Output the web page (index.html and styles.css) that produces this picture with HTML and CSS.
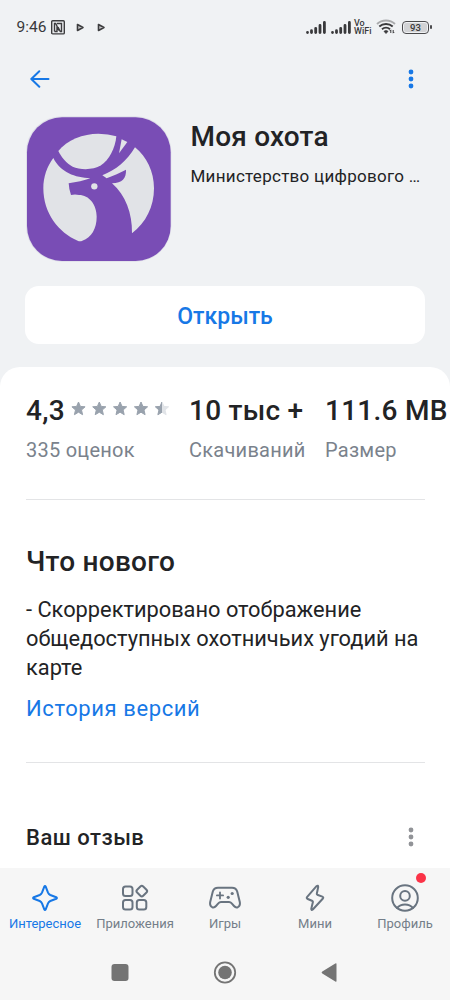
FILE: index.html
```html
<!DOCTYPE html>
<html lang="ru">
<head>
<meta charset="utf-8">
<title>Моя охота</title>
<link rel="stylesheet" href="styles.css">
</head>
<body>
<div class="screen">
  <header class="status">
    <span class="time">9:46</span>
    <svg class="nfc" width="14" height="15" viewBox="0 0 14 15" fill="none" stroke="#3d3d3f" stroke-width="1.4"><rect x=".7" y=".7" width="12.6" height="13.2" rx="1"/><path d="M3.500 11.500V3.500h1.200L8 10.500M3.500 11.500H6V6M6 3.500h4.500v8H9.300L7 7"/></svg>
    <svg class="play" width="9" height="9" viewBox="0 0 9 9"><path d="M1.500 1.500v6l5.500-3z" fill="#c9c9cb" stroke="#3d3d3f" stroke-width="1.600" stroke-linejoin="round"/></svg>
    <svg class="play second" width="9" height="9" viewBox="0 0 9 9"><path d="M1.500 1.500v6l5.500-3z" fill="#c9c9cb" stroke="#3d3d3f" stroke-width="1.600" stroke-linejoin="round"/></svg>
    <svg class="signal" width="20" height="13" viewBox="0 0 20 13" stroke="#39393b" stroke-width="2.800" stroke-linecap="round"><path d="M1.500 11.500v0M5.500 11.500v-1.800M9.700 11.500V7.300M14 11.500V4.500M18.400 11.500V1.500"/></svg>
    <svg class="signal" width="20" height="13" viewBox="0 0 20 13" stroke="#39393b" stroke-width="2.800" stroke-linecap="round"><path d="M1.500 11.500v0M5.500 11.500v-1.800M9.700 11.500V7.300M14 11.500V4.500M18.400 11.500V1.500"/></svg>
    <span class="vowifi"><span>Vo</span><span>WiFi</span></span>
    <svg class="wifi" width="20" height="16" viewBox="0 0 20 16" fill="none" stroke="#39393b" stroke-width="1.900"><path d="M1 5C6 .3 14 .3 19 5" stroke="#a9aaac"/><path d="M3.300 7.500C7 4.200 13 4.200 16.700 7.500M6 10.300c2.300-2 5.700-2 8 0"/><path d="M8 12.300q2-1.400 4 0l-2 2.200z" fill="#39393b" stroke-width=".8"/><path d="M14.800 14v-3M13.800 12l1-1.200M17.200 11v3M18.200 13l-1 1.200" stroke-width="1"/></svg>
    <span class="battery"><span class="level">93</span></span>
  </header>

  <nav class="toolbar">
    <svg width="20" height="18" viewBox="0 0 20 18" fill="none" stroke="#1778e6" stroke-width="2" stroke-linecap="round" stroke-linejoin="round"><path d="M18.500 9H1.500M9.300 1.200L1.300 9l8 7.800"/></svg>
    <svg width="6" height="20" viewBox="0 0 6 20" fill="#1778e6"><circle cx="3" cy="3" r="2.400"/><circle cx="3" cy="10" r="2.400"/><circle cx="3" cy="17" r="2.400"/></svg>
  </nav>

  <section class="app">
    <svg class="app-icon" width="146" height="146" viewBox="33 33 438 438">
      <rect x="33" y="34" width="436" height="436" rx="107" fill="#dfdfe9"/>
      <rect x="36" y="37" width="431" height="431" rx="105" fill="#794db5"/>
      <g fill="#e1e3e7">
        <path d="M130 138C155 105 205 86 250 86Q280 86 304 94C301 129 282 166 258 181C234 196 195 195 173 185C154 175 140 158 130 138Z"/>
        <path d="M320 103L337 111L312 145Z"/>
        <path d="M115 159C96 185 85 215 85 250C85 325 132 384 188 407Q195 410 202 407C230 397 245 370 245 335C245 299 222 270 192 270Q180 267 168 270Q162 254 161 235C184 232 208 227 226 220C180 217 137 203 115 159Z"/>
        <path d="M360 127C395 155 417 200 417 250C417 305 393 353 351 385C352 325 332 270 291 235C322 234 334 220 333 194C315 204 296 211 275 220L262 211C303 195 335 168 360 127Z"/>
        <circle cx="238" cy="244" r="9.500"/>
      </g>
    </svg>
    <div class="app-text">
      <h1>Моя охота</h1>
      <p>Министерство цифрового …</p>
    </div>
  </section>

  <button class="open">Открыть</button>

  <main class="sheet">
    <section class="stats">
      <div class="stat rating">
        <div class="value"><span>4,3</span>
          <svg class="stars" width="101" height="16" viewBox="0 0 101 16">
            <defs><path id="star" d="M7.500 1l1.900 4.400 4.700.400-3.600 3.200 1.100 4.700-4.100-2.500-4.100 2.500 1.100-4.700L.9 5.800l4.700-.400z" stroke-width="1" stroke-linejoin="round"/>
            <clipPath id="half"><rect width="7.500" height="16"/></clipPath></defs>
            <g fill="#99a2ad" stroke="#99a2ad"><use href="#star"/><use href="#star" x="20.800"/><use href="#star" x="41.600"/><use href="#star" x="62.500"/></g>
            <g transform="translate(83.500)"><use href="#star" fill="#e1e4e8" stroke="#e1e4e8"/><g clip-path="url(#half)"><use href="#star" fill="#99a2ad" stroke="#99a2ad"/></g></g>
          </svg>
        </div>
        <div class="label">335 оценок</div>
      </div>
      <div class="stat downloads"><div class="value">10 тыс +</div><div class="label">Скачиваний</div></div>
      <div class="stat"><div class="value size">111.6 MB</div><div class="label">Размер</div></div>
    </section>

    <section class="news">
      <h2>Что нового</h2>
      <p>- Скорректировано отображение<br>общедоступных охотничьих угодий на<br>карте</p>
      <a class="history">История версий</a>
    </section>

    <section class="review">
      <h3>Ваш отзыв</h3>
      <svg width="6" height="20" viewBox="0 0 6 20" fill="#919397"><circle cx="3" cy="3" r="2.400"/><circle cx="3" cy="10" r="2.400"/><circle cx="3" cy="17" r="2.400"/></svg>
    </section>
  </main>

  <footer class="bottom">
    <nav class="tabs">
      <div class="tab active">
        <svg width="30" height="30" viewBox="0 0 30 30"><path d="M15.800 3.800L18 9.700Q18.700 11.300 20.300 12L26.200 14.200Q27.600 15 26.200 15.800L20.300 18Q18.700 18.700 18 20.300L15.800 26.200Q15 27.600 14.200 26.200L12 20.300Q11.300 18.700 9.700 18L3.800 15.800Q2.400 15 3.800 14.200L9.700 12Q11.300 11.300 12 9.700L14.200 3.800Q15 2.400 15.800 3.800Z"/></svg>
        <span>Интересное</span>
      </div>
      <div class="tab">
        <svg width="30" height="30" viewBox="0 0 30 30"><rect x="3" y="3.500" width="9.500" height="9.500" rx="2.500"/><rect x="3" y="17" width="9.500" height="9.500" rx="2.500"/><rect x="16.800" y="17" width="9.500" height="9.500" rx="2.500"/><rect x="17.500" y="3.800" width="8.600" height="8.600" rx="2" transform="rotate(45 21.800 8.100)"/></svg>
        <span>Приложения</span>
      </div>
      <div class="tab">
        <svg width="32" height="30" viewBox="0 0 32 30"><path d="M9 4.700H23Q27 4.700 28.200 8.500L30.800 19Q31.500 23 28.800 24.200Q26.700 25 25 23L22.500 20.200Q21.500 19 20 19H12Q10.500 19 9.500 20.200L7 23Q5.300 25 3.200 24.200Q.5 23 1.200 19L3.800 8.500Q5 4.700 9 4.700Z"/><path d="M11 9.300v6.200M7.900 12.400h6.200" stroke-width="1.800"/><g class="dots"><circle cx="23.200" cy="10.500" r="1.600"/><circle cx="19.200" cy="14.300" r="1.600"/></g></svg>
        <span>Игры</span>
      </div>
      <div class="tab">
        <svg width="30" height="30" viewBox="0 0 30 30"><path d="M16.500 3.200L7.200 13.800Q6 15.300 7.800 16L12.500 18Q13 18.300 12.900 19L11.300 25.700Q11.200 27.700 12.800 26.500L22.700 15.800Q24 14.300 22.300 13.600L17.300 11.700Q16.700 11.400 16.800 10.700L18.200 4Q18.200 1.800 16.500 3.200Z"/></svg>
        <span>Мини</span>
      </div>
      <div class="tab">
        <svg width="30" height="30" viewBox="0 0 30 30"><circle cx="15" cy="15" r="12.800"/><circle cx="15" cy="12.900" r="4.800"/><path d="M7 25Q10 21.500 15 21.500T23 25"/></svg>
        <span>Профиль</span>
        <i class="badge"></i>
      </div>
    </nav>
    <div class="system">
      <svg width="226" height="24" viewBox="0 0 226 24" fill="#747474"><rect x="0.500" y="4" width="17" height="17" rx="3"/><circle cx="114" cy="12.500" r="10.200" fill="none" stroke="#747474" stroke-width="1.800"/><circle cx="114" cy="12.500" r="6.800"/><path d="M225.500 4v17q0 1.300-1.200.500l-13-8q-1.500-1 0-2l13-8q1.200-.8 1.200.500z"/></svg>
    </div>
  </footer>
</div>
</body>
</html>
```
FILE: styles.css
```css
* { box-sizing: border-box; }
body { margin: 0; background: #f0f2f4; font-family: Roboto, "Noto Sans", sans-serif; color: #222325; }
h1, h2, h3, p { margin: 0; font-weight: 500; white-space: nowrap; }
svg { display: block; flex: none; }
.screen { width: 450px; height: 1000px; overflow: hidden; display: flex; flex-direction: column; }
.status { height: 54px; flex: none; display: flex; align-items: center; padding: 0 21px 0 16.500px; color: #39393b; }
.time { font-size: 15.500px; width: 34px; white-space: nowrap; }
.play { margin-left: 11px; }
.play.second { margin-left: 12px; }
.signal { margin-right: 5px; }
.play.second + .signal { margin-left: auto; }
.vowifi { width: 20px; display: flex; flex-direction: column; font-size: 9px; line-height: 8.500px; font-weight: 500; margin-right: 2px; margin-left: -2px; }
.wifi { margin-right: 6px; }
.battery { position: relative; width: 27px; height: 13px; border: 1.500px solid #4b4b4d; border-radius: 4px; padding: 1px; }
.battery::after { content: ""; position: absolute; right: -4px; top: 3px; width: 2px; height: 4px; border-radius: 1px; background: #4b4b4d; }
.level { display: block; height: 9px; border-radius: 2px; background: #d2d3d5; font-size: 9.500px; line-height: 9px; font-weight: 500; text-align: center; }
.toolbar { height: 50px; flex: none; display: flex; justify-content: space-between; align-items: center; padding: 0 36px 0 30px; }
.app { height: 182px; flex: none; display: flex; gap: 18.500px; padding: 12px 0 0 26px; }
.app-text { padding-top: 4px; }
h1 { font-size: 28px; line-height: 34px; letter-spacing: .2px; }
.app-text p { font-size: 17px; line-height: 22px; margin-top: 11px; font-weight: 400; letter-spacing: .28px; }
.open { height: 58px; flex: none; margin: 0 25px; border: 0; border-radius: 14px; background: #fff; color: #1778e6; font: 500 23px/58px Roboto, "Noto Sans", sans-serif; padding: 2px 0 0; }
.sheet { flex: 1; min-height: 0; margin-top: 23px; background: #fff; border-radius: 20px 20px 0 0; padding: 0 25px 0 26px; overflow: hidden; }
.stats { height: 133px; display: flex; border-bottom: 1px solid #e3e4e6; padding-top: 27px; }
.stat { flex: none; white-space: nowrap; }
.rating { width: 163px; }
.downloads { width: 136px; }
.value { display: flex; font-size: 28px; line-height: 34px; font-weight: 500; letter-spacing: .25px; }
.stars { margin: 7px 0 0 6px; }
.label { font-size: 20px; line-height: 24px; margin-top: 10px; color: #7a828c; letter-spacing: .25px; }
.news { height: 263px; border-bottom: 1px solid #e3e4e6; padding-top: 45px; }
h2 { font-size: 28px; line-height: 34px; letter-spacing: .25px; }
.news p { font-size: 21.800px; line-height: 29px; margin-top: 16px; font-weight: 400; }
.history { display: block; margin-top: 14px; font-size: 22px; line-height: 26px; letter-spacing: .6px; color: #1778e6; }
.review { display: flex; justify-content: space-between; align-items: center; padding: 60px 11px 0 0; }
h3 { font-size: 22px; line-height: 30px; letter-spacing: .5px; }
.review svg { margin-top: -2px; }
.bottom { height: 132px; flex: none; background: #f6f6f6; }
.tabs { height: 78px; display: grid; grid-template-columns: repeat(5, 90px); }
.tab { position: relative; display: flex; flex-direction: column; align-items: center; padding-top: 15px; font-size: 13px; color: #747e89; white-space: nowrap; }
.tab span { line-height: 16px; margin-top: 3px; }
.tab svg { fill: none; stroke: #697480; stroke-width: 2; stroke-linecap: round; stroke-linejoin: round; }
.tab .dots { fill: #697480; stroke: none; }
.active { color: #1778e6; }
.active svg { stroke: #1778e6; }
.badge { position: absolute; left: 56px; top: 5px; width: 10px; height: 10px; border-radius: 50%; background: #fb3347; }
.system { padding: 14px 0 0 111px; }
```
